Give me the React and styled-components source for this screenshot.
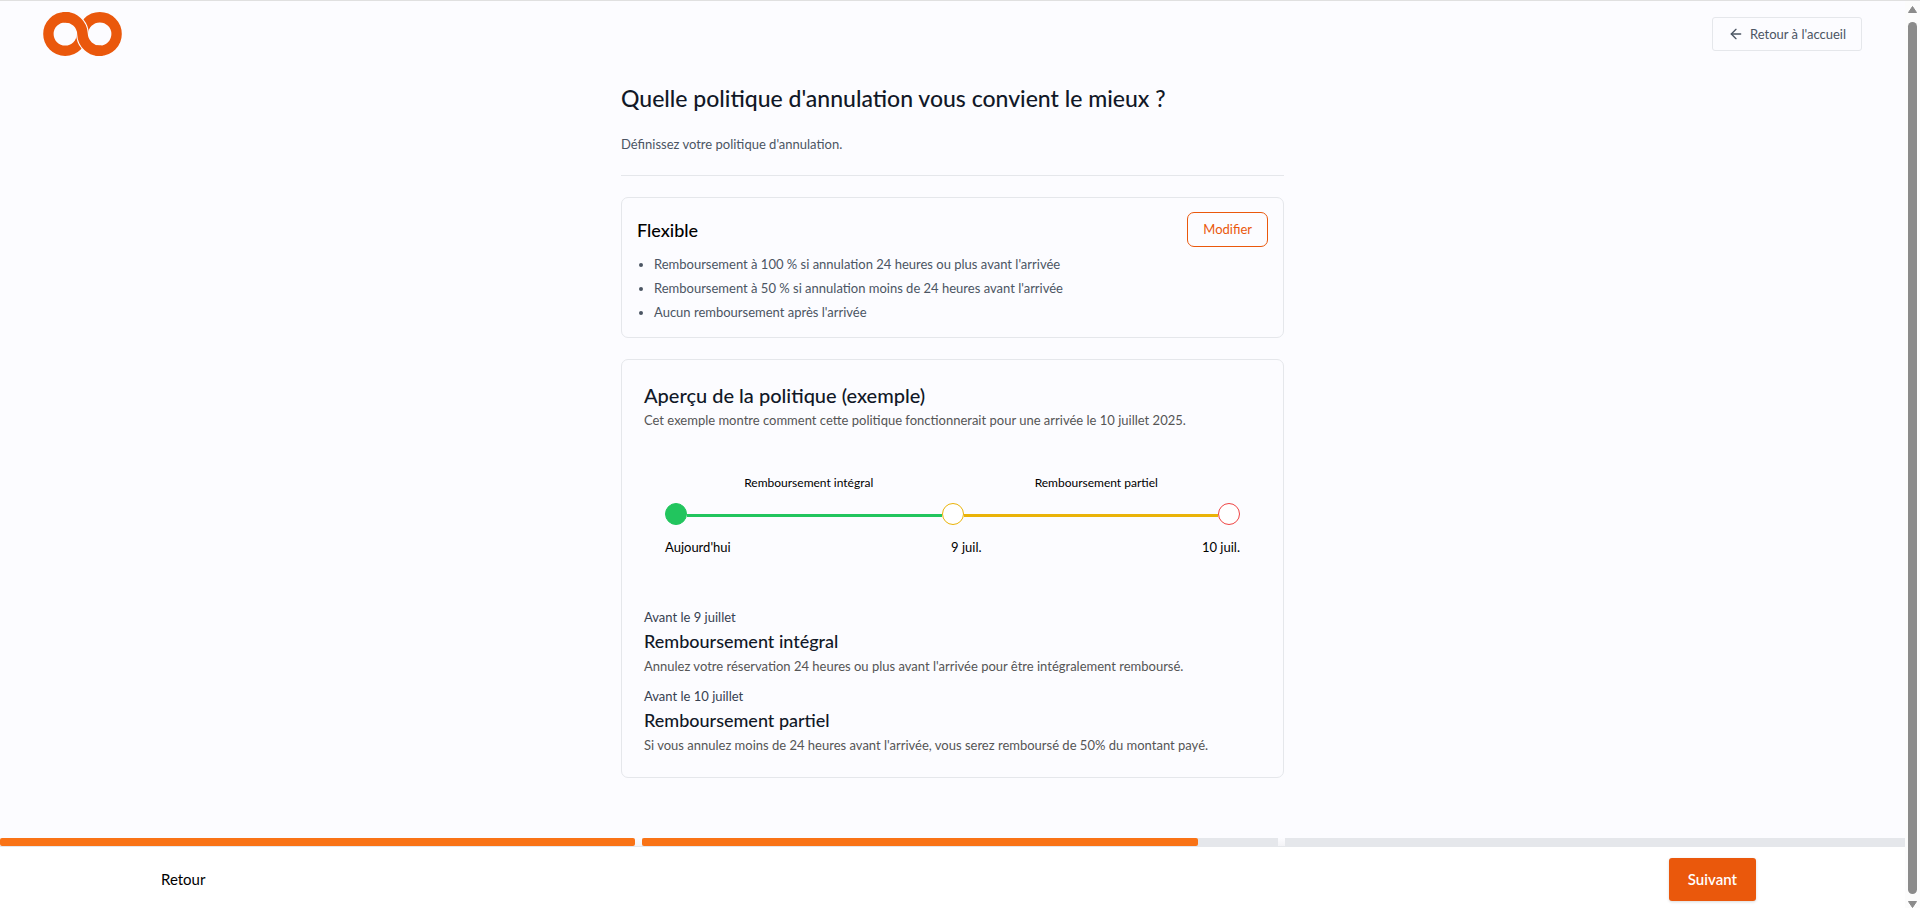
import React from "react";
import { ArrowLeft } from "lucide-react";
import styled, { createGlobalStyle } from "styled-components";

const conditions = [
  "Remboursement à 100 % si annulation 24 heures ou plus avant l'arrivée",
  "Remboursement à 50 % si annulation moins de 24 heures avant l'arrivée",
  "Aucun remboursement après l'arrivée",
];

const details = [
  {
    deadline: "Avant le 9 juillet",
    title: "Remboursement intégral",
    text: "Annulez votre réservation 24 heures ou plus avant l'arrivée pour être intégralement remboursé.",
  },
  {
    deadline: "Avant le 10 juillet",
    title: "Remboursement partiel",
    text: "Si vous annulez moins de 24 heures avant l'arrivée, vous serez remboursé de 50% du montant payé.",
  },
];

// completion of each of the three stages, in percent
const stages = [100, 87.5, 0];

function Logo() {
  return (
    <svg width="79" height="44" viewBox="0 0 79 44" fill="none" role="img" aria-label="Logo">
      <g stroke="#ea580c" strokeWidth="10.4">
        <circle cx="22.2" cy="22" r="16.8" />
        <circle cx="56.8" cy="22" r="16.8" />
      </g>
      <path
        d="M26 5.7C33.8 7.4 39.3 14 39.5 22C39.7 30 45.2 36.6 53 38.3"
        stroke="#fcfcff"
        strokeWidth="12.8"
      />
      <path
        d="M20 5.3C31 4 39.2 12.7 39.5 22C39.8 31.3 48 40 59 38.7"
        stroke="#ea580c"
        strokeWidth="10.6"
      />
    </svg>
  );
}

function Scrollbar() {
  return (
    <StyledScrollbar aria-hidden="true">
      <svg width="9" height="7" viewBox="0 0 9 7">
        <path d="M4.5 0.5L8.5 6.5H0.5Z" />
      </svg>
      <div className="thumb" />
      <svg width="9" height="7" viewBox="0 0 9 7">
        <path d="M4.5 6.5L8.5 0.5H0.5Z" />
      </svg>
    </StyledScrollbar>
  );
}

function Timeline() {
  return (
    <StyledTimeline>
      <div className="periods">
        <span>Remboursement intégral</span>
        <span>Remboursement partiel</span>
      </div>
      <div className="track">
        <Dot $color="#22c55e" $filled />
        <Segment $color="#22c55e" />
        <Dot $color="#eab308" />
        <Segment $color="#eab308" />
        <Dot $color="#ef4444" />
      </div>
      <div className="dates">
        <span>Aujourd'hui</span>
        <span>9 juil.</span>
        <span>10 juil.</span>
      </div>
    </StyledTimeline>
  );
}

function App() {
  return (
    <Shell>
      <GlobalStyle />
      <Page>
        <Header>
          <Logo />
          <HomeLink href="#">
            <ArrowLeft size={16} strokeWidth={2} />
            Retour à l'accueil
          </HomeLink>
        </Header>

        <Main>
          <Intro>
            <h1>Quelle politique d'annulation vous convient le mieux ?</h1>
            <p>Définissez votre politique d'annulation.</p>
          </Intro>

          <PolicyCard>
            <div className="heading">
              <h2>Flexible</h2>
              <EditButton type="button">Modifier</EditButton>
            </div>
            <ul>
              {conditions.map((condition) => (
                <li key={condition}>{condition}</li>
              ))}
            </ul>
          </PolicyCard>

          <PreviewCard>
            <h2>Aperçu de la politique (exemple)</h2>
            <Text>
              Cet exemple montre comment cette politique fonctionnerait pour une arrivée le 10 juillet 2025.
            </Text>
            <Timeline />
            <Details>
              {details.map((item) => (
                <div key={item.title}>
                  <div className="deadline">{item.deadline}</div>
                  <h3>{item.title}</h3>
                  <Text>{item.text}</Text>
                </div>
              ))}
            </Details>
          </PreviewCard>
        </Main>

        <Footer>
          <Progress>
            {stages.map((value, index) => (
              <div className="stage" key={index}>
                <div className="fill" style={{ width: `${value}%` }} />
              </div>
            ))}
          </Progress>
          <Actions>
            <BackButton type="button">Retour</BackButton>
            <NextButton type="button">Suivant</NextButton>
          </Actions>
        </Footer>
      </Page>
      <Scrollbar />
    </Shell>
  );
}

export default App;

const GlobalStyle = createGlobalStyle`
  * {
    box-sizing: border-box;
  }

  body {
    margin: 0;
    background: #fcfcff;
    color: #111827;
    font-family: Lato, "Liberation Sans", sans-serif;
    font-size: 13px;
    line-height: 20px;
  }

  h1, h2, h3, p, ul {
    margin: 0;
    padding: 0;
    font-weight: 500;
  }

  button {
    font-family: inherit;
    cursor: pointer;
  }
`;

const Shell = styled.div`
  display: grid;
  grid-template-columns: minmax(0, 1fr) 15px;
  min-height: 100vh;
  border-top: 1px solid #e0e0e0;
`;

const Page = styled.div`
  display: flex;
  flex-direction: column;
`;

const Header = styled.header`
  display: flex;
  align-items: center;
  justify-content: space-between;
  padding: 11px 43px;
`;

const HomeLink = styled.a`
  display: flex;
  align-items: center;
  gap: 6px;
  padding: 6px 15px;
  border: 1px solid #e5e7eb;
  border-radius: 3px;
  color: #4b5563;
  text-decoration: none;
`;

const Main = styled.main`
  display: flex;
  flex: 1;
  flex-direction: column;
  gap: 21px;
  width: 100%;
  max-width: 663px;
  margin: 0 auto;
  padding: 15px 0 40px;
`;

const Intro = styled.div`
  padding-bottom: 21px;
  border-bottom: 1px solid #e5e7eb;

  h1 {
    margin-bottom: 20px;
    font-size: 23px;
    line-height: 32px;
  }

  p {
    color: #4b5563;
    font-weight: 400;
  }
`;

const Card = styled.section`
  border: 1px solid #e5e7eb;
  border-radius: 7px;
`;

const PolicyCard = styled(Card)`
  padding: 14px 15px 13px;

  .heading {
    display: flex;
    align-items: center;
    justify-content: space-between;
    margin-bottom: 5px;
  }

  h2 {
    color: #000;
    font-size: 18px;
    line-height: 24px;
  }

  ul {
    padding-left: 17px;
    color: #4b5563;
    font-weight: 400;
    line-height: 24px;
  }
`;

const EditButton = styled.button`
  padding: 7px 15px;
  border: 1px solid #ea580c;
  border-radius: 7px;
  background: transparent;
  color: #ea580c;
  font-size: 13px;
  line-height: 19px;
`;

const PreviewCard = styled(Card)`
  padding: 21px 22px;

  h2 {
    font-size: 20px;
    line-height: 28px;
  }
`;

const Text = styled.p`
  color: #555;
  font-weight: 400;
  line-height: 22px;
`;

const StyledTimeline = styled.div`
  padding: 44px 21px 50px;
  color: #000;

  .periods {
    display: flex;
    font-size: 12px;
    line-height: 16px;
    text-align: center;
  }

  .periods span {
    flex: 1;
  }

  .track {
    display: flex;
    align-items: center;
    margin: 12px 0;
  }

  .dates {
    display: flex;
    justify-content: space-between;
  }
`;

const Dot = styled.div`
  width: 22px;
  height: 22px;
  border: 1px solid ${(props) => props.$color};
  border-radius: 50%;
  background: ${(props) => (props.$filled ? props.$color : "#fff")};
`;

const Segment = styled.div`
  flex: 1;
  height: 3px;
  margin-top: 3px;
  background: ${(props) => props.$color};
`;

const Details = styled.div`
  display: flex;
  flex-direction: column;
  gap: 9px;

  .deadline {
    color: #374151;
  }

  h3 {
    font-size: 18px;
    line-height: 28px;
  }
`;

const Footer = styled.footer`
  overflow-x: clip;
  background: #fff;
`;

// runs under the scrollbar, as a full viewport width bar does
const Progress = styled.div`
  display: flex;
  gap: 7px;
  width: 100vw;
  border-bottom: 1px solid #e5e7eb;
  background: linear-gradient(#fcfcff, #f3f3f6);

  .stage {
    flex: 1;
    height: 8px;
    background: #e5e7eb;
  }

  .stage:first-child {
    background: transparent;
  }

  .fill {
    height: 100%;
    border-radius: 2px;
    background: #f97316;
  }
`;

const Actions = styled.div`
  display: flex;
  align-items: center;
  justify-content: space-between;
  max-width: 1607px;
  margin: 0 auto;
  padding: 11px 0 7px;
`;

const BackButton = styled.button`
  padding: 11px 12px;
  border: none;
  background: transparent;
  color: #000;
  font-size: 15px;
  line-height: 21px;
`;

const NextButton = styled.button`
  padding: 11px 19px;
  border: none;
  border-radius: 3px;
  background: #ea580c;
  box-shadow: 0 1px 3px rgba(0, 0, 0, 0.15);
  color: #fff;
  font-size: 15px;
  font-weight: 600;
  line-height: 21px;
`;

const StyledScrollbar = styled.div`
  display: flex;
  flex-direction: column;
  align-items: center;
  padding-top: 5px;
  background: #fcfcfc;

  svg {
    fill: #8b8b8b;
    stroke: #8b8b8b;
    stroke-linejoin: round;
  }

  .thumb {
    flex: 1;
    width: 9px;
    margin: 9px 0 7px;
    border-radius: 5px;
    background: #8b8b8b;
  }
`;
